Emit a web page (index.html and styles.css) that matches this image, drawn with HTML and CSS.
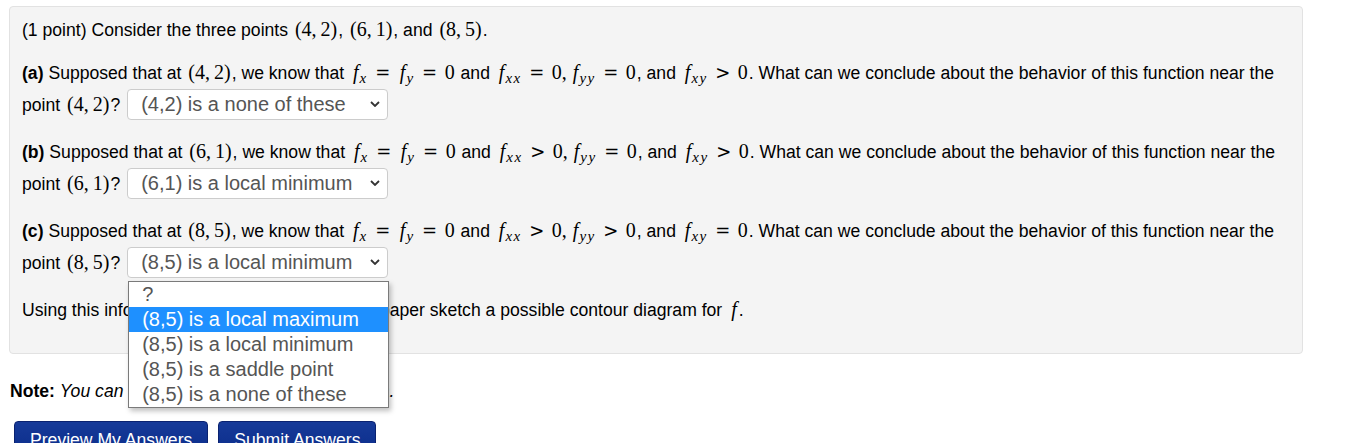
FILE: index.html
```html
<!DOCTYPE html>
<html>
<head>
<meta charset="utf-8">
<link rel="stylesheet" href="styles.css">
</head>
<body>
<div class="problem">
  <p class="para">(1 point) Consider the three points <span class="m">(4,&thinsp;2)</span>, <span class="m">(6,&thinsp;1)</span>, and <span class="m">(8,&thinsp;5)</span>.</p>

  <div class="part">
    <div class="row1"><b>(a)</b> Supposed that at <span class="m">(4,&thinsp;2)</span>, we know that <span class="m"><i class="f">f</i><sub>x</sub><span class="op">=</span><i class="f">f</i><sub>y</sub><span class="op">=</span>0</span> and <span class="m"><i class="f">f</i><sub>xx</sub><span class="op">=</span>0,&thinsp;<i class="f">f</i><sub>yy</sub><span class="op">=</span>0</span>, and <span class="m"><i class="f">f</i><sub>xy</sub><span class="op">&gt;</span>0</span>. What can we conclude about the behavior of this function near the</div>
    <div class="row2"><span>point <span class="m">(4,&thinsp;2)</span>?</span><span class="select"><span class="select-text">(4,2) is a none of these</span><svg class="chev" width="10" height="6" viewBox="0 0 10 6"><path d="M1 1 L5 5 L9 1" fill="none" stroke="#333" stroke-width="1.8"/></svg></span></div>
  </div>

  <div class="part">
    <div class="row1"><b>(b)</b> Supposed that at <span class="m">(6,&thinsp;1)</span>, we know that <span class="m"><i class="f">f</i><sub>x</sub><span class="op">=</span><i class="f">f</i><sub>y</sub><span class="op">=</span>0</span> and <span class="m"><i class="f">f</i><sub>xx</sub><span class="op">&gt;</span>0,&thinsp;<i class="f">f</i><sub>yy</sub><span class="op">=</span>0</span>, and <span class="m"><i class="f">f</i><sub>xy</sub><span class="op">&gt;</span>0</span>. What can we conclude about the behavior of this function near the</div>
    <div class="row2"><span>point <span class="m">(6,&thinsp;1)</span>?</span><span class="select"><span class="select-text">(6,1) is a local minimum</span><svg class="chev" width="10" height="6" viewBox="0 0 10 6"><path d="M1 1 L5 5 L9 1" fill="none" stroke="#333" stroke-width="1.8"/></svg></span></div>
  </div>

  <div class="part">
    <div class="row1"><b>(c)</b> Supposed that at <span class="m">(8,&thinsp;5)</span>, we know that <span class="m"><i class="f">f</i><sub>x</sub><span class="op">=</span><i class="f">f</i><sub>y</sub><span class="op">=</span>0</span> and <span class="m"><i class="f">f</i><sub>xx</sub><span class="op">&gt;</span>0,&thinsp;<i class="f">f</i><sub>yy</sub><span class="op">&gt;</span>0</span>, and <span class="m"><i class="f">f</i><sub>xy</sub><span class="op">=</span>0</span>. What can we conclude about the behavior of this function near the</div>
    <div class="row2"><span>point <span class="m">(8,&thinsp;5)</span>?</span><span class="select"><span class="select-text">(8,5) is a local minimum</span><svg class="chev" width="10" height="6" viewBox="0 0 10 6"><path d="M1 1 L5 5 L9 1" fill="none" stroke="#333" stroke-width="1.8"/></svg><span class="dropdown"><span class="opt">?</span><span class="opt active">(8,5) is a local maximum</span><span class="opt">(8,5) is a local minimum</span><span class="opt">(8,5) is a saddle point</span><span class="opt">(8,5) is a none of these</span></span></span></div>
  </div>

  <p class="para">Using this information, on a separate piece of paper sketch a possible contour diagram for <span class="m"><i class="f">f</i></span>.</p>
</div>

<p class="note"><b>Note:</b> <i>You can earn partial credit on this problem.</i></p>

<div class="buttons">
  <button class="btn">Preview My Answers</button>
  <button class="btn">Submit Answers</button>
</div>
</body>
</html>
```

FILE: styles.css
```css
html, body {
  margin: 0;
  padding: 0;
  background: #fff;
}
body {
  font-family: "Liberation Sans", Arial, sans-serif;
  font-size: 17.6px;
  color: #000;
}
.problem {
  margin: 6px 64px 0 9px;
  background: #f4f4f4;
  border: 1px solid #e2e2e2;
  border-radius: 4px;
  padding: 9px 12px 14px 12px;
}
.para {
  margin: 0 0 16px 0;
  line-height: 26px;
}
.part {
  margin: 0 0 16px 0;
}
.row1 {
  line-height: 26px;
  white-space: nowrap;
}
.row2 {
  display: flex;
  align-items: center;
  gap: 7px;
  height: 36px;
  line-height: 26px;
}
.m {
  font-family: "Liberation Serif", "DejaVu Serif", serif;
  font-size: 20px;
  white-space: nowrap;
  margin: 0 1px 0 2px;
}
.m i.f {
  font-style: italic;
  padding: 0 1px 0 2px;
}
.m sub {
  font-family: "Liberation Serif", serif;
  font-style: italic;
  font-size: 15px;
  letter-spacing: 1.5px;
  vertical-align: -4px;
  line-height: 0;
}
.op {
  font-family: "DejaVu Serif", serif;
  font-size: 18px;
  margin: 0 7.5px;
}
.select {
  position: relative;
  display: flex;
  align-items: center;
  justify-content: space-between;
  box-sizing: border-box;
  width: 261px;
  height: 31px;
  padding: 0 7px 0 13px;
  background: #fff;
  border: 1px solid #ccc;
  border-radius: 4px;
  font-size: 20px;
  color: #555;
  line-height: 29px;
}
.chev {
  flex: none;
}
.dropdown {
  position: absolute;
  left: 0;
  top: 33px;
  width: 261px;
  box-sizing: border-box;
  display: flex;
  flex-direction: column;
  background: #fff;
  border: 1px solid #7a7a7a;
  box-shadow: 2px 3px 5px rgba(0,0,0,0.25);
  z-index: 5;
}
.opt {
  display: block;
  height: 25px;
  line-height: 25px;
  padding-left: 13px;
  font-size: 20px;
  color: #555;
  white-space: nowrap;
}
.opt.active {
  background: #1e90ff;
  color: #fff;
}
.note {
  margin: 24px 0 0 10px;
  line-height: 26px;
}
.buttons {
  display: flex;
  gap: 10px;
  margin: 17px 0 0 14px;
}
.btn {
  font-family: "Liberation Sans", Arial, sans-serif;
  font-size: 17.6px;
  color: #fff;
  background: linear-gradient(#163a99, #0a2b88);
  border: 1px solid #0a2270;
  border-radius: 4px;
  padding: 6px 15px;
  line-height: 24px;
}
```
